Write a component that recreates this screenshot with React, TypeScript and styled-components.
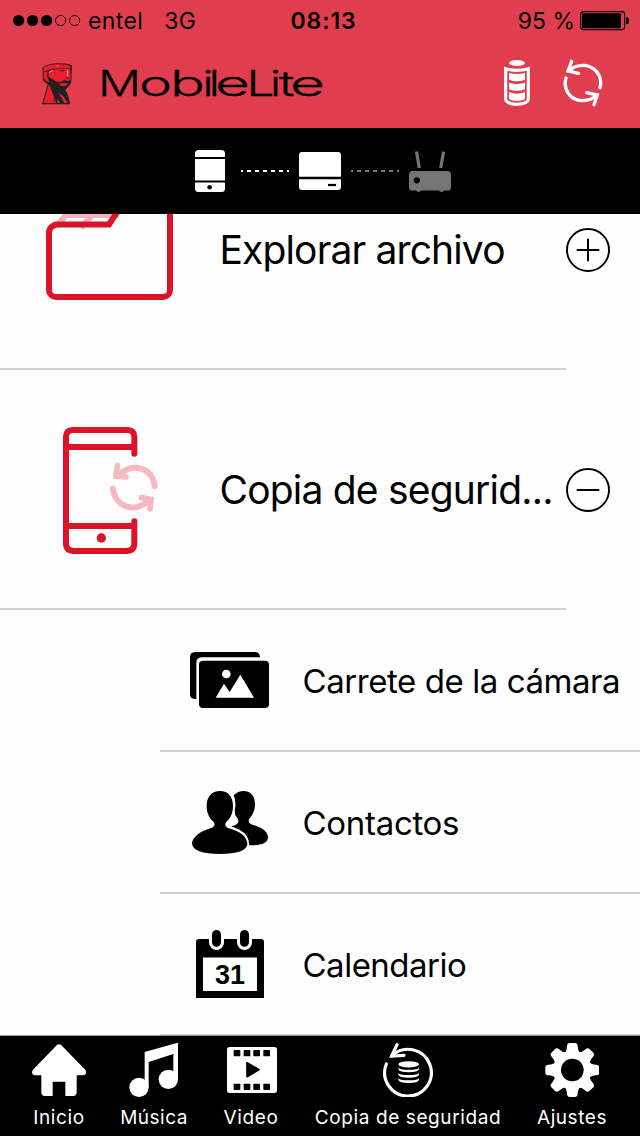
import React from "react";
import styled, { createGlobalStyle } from "styled-components";

const GlobalStyle = createGlobalStyle`
  * { box-sizing: border-box; }
  body { margin: 0; background: #fff; font-family: Inter, "Liberation Sans", sans-serif; color: #000; }
  svg { display: block; flex: none; }
`;

const Screen = styled.div`
  width: 640px;
  height: 1136px;
  display: flex;
  flex-direction: column;
  overflow: hidden;
  background: #fefefe;
`;

const Header = styled.header`
  height: 128px;
  flex: none;
  background: #e03e4e;
`;

const StatusBar = styled.div`
  height: 40px;
  display: grid;
  grid-template-columns: 1fr auto 1fr;
  align-items: center;
  padding: 2px 10px 0 13px;
  font-size: 23px;
  line-height: 28px;
`;

const StatusGroup = styled.div<{ $end?: boolean }>`
  display: flex;
  align-items: center;
  justify-content: ${(p) => (p.$end ? "flex-end" : "flex-start")};
`;

const StatusText = styled.span<{ $left?: number; $spacing?: number }>`
  margin-left: ${(p) => p.$left ?? 0}px;
  letter-spacing: ${(p) => p.$spacing ?? 0}px;
  white-space: pre;
`;

const Clock = styled.span`
  font-weight: 600;
  letter-spacing: 0.9px;
  padding-left: 4px;
`;

const TitleBar = styled.div`
  height: 88px;
  display: flex;
  align-items: center;
  padding: 0 36px 0 42px;
`;

const Spacer = styled.div`
  flex: 1;
`;

const Actions = styled.div`
  display: flex;
  align-items: center;
  gap: 32px;
  margin-top: -2px;
`;

const WordmarkSvg = styled.svg`
  margin-left: 14px;
  overflow: visible;
`;

const LinkBar = styled.div`
  height: 86px;
  flex: none;
  display: flex;
  align-items: center;
  padding-left: 195px;
  background: #000;
`;

const LinkGap = styled.div<{ $width: number }>`
  width: ${(p) => p.$width}px;
  flex: none;
`;

const List = styled.main`
  height: 822px;
  flex: none;
  display: flex;
  flex-direction: column;
  justify-content: flex-end;
  overflow: hidden;
`;

const Row = styled.div`
  height: 240px;
  flex: none;
  display: flex;
  align-items: center;
`;

const RowMain = styled.div`
  width: 566px;
  height: 240px;
  display: flex;
  align-items: center;
  padding-top: 2px;
  border-bottom: 2px solid #cfcfd0;
`;

const RowIcon = styled.div<{ $inset: number; $lift?: number }>`
  width: 219.5px;
  flex: none;
  padding-left: ${(p) => p.$inset}px;
  padding-bottom: ${(p) => p.$lift ?? 0}px;
`;

const RowLabel = styled.span<{ $spacing: number }>`
  font-size: 39px;
  line-height: 48px;
  letter-spacing: ${(p) => p.$spacing}px;
  white-space: nowrap;
`;

const SubRow = styled.div`
  height: 142px;
  flex: none;
  margin-left: 160px;
  padding: 2px 0 0 26px;
  display: flex;
  align-items: center;
  border-bottom: 2px solid #cfcfd0;
`;

const SubIcon = styled.div<{ $inset: number }>`
  width: 116.5px;
  flex: none;
  padding: 0 0 2px ${(p) => p.$inset}px;
`;

const SubLabel = styled.span<{ $spacing: number }>`
  font-size: 33px;
  line-height: 40px;
  letter-spacing: ${(p) => p.$spacing}px;
  white-space: nowrap;
`;

const TabBar = styled.nav`
  height: 101px;
  flex: none;
  margin-top: -1px;
  border-top: 1px solid #9a9a9a;
  background: #000;
  display: flex;
  gap: 34px;
  padding: 7px 0 0 32px;
  position: relative;
`;

const Tab = styled.div<{ $width: number }>`
  width: ${(p) => p.$width}px;
  display: flex;
  flex-direction: column;
  align-items: center;
  color: #fff;
`;

const TabLabel = styled.span<{ $spacing: number }>`
  margin-top: 9px;
  font-size: 19px;
  line-height: 24px;
  letter-spacing: ${(p) => p.$spacing}px;
  white-space: nowrap;
`;

const SignalDots = () => (
  <svg width="68" height="14" viewBox="0 0 68 14">
    {[0, 1, 2].map((i) => (
      <circle key={i} cx={5.6 + i * 14} cy="6.500" r="5.600" />
    ))}
    {[3, 4].map((i) => (
      <circle key={i} cx={5.6 + i * 14} cy="6.500" r="5.100" fill="none" stroke="#000" strokeWidth="1" />
    ))}
  </svg>
);

const PhoneBattery = () => (
  <svg width="50" height="20" viewBox="0 0 50 20">
    <rect x="0.6" y="0.7" width="44" height="18" rx="2.6" fill="none" stroke="#000" strokeWidth="1.2" />
    <rect x="2" y="2.2" width="39" height="15" rx="1" />
    <path d="M46 6.3c2.6.2 3 1.600 3 3.500s-.4 3.300-3 3.500z" />
  </svg>
);

const HeadLogo = () => (
  <svg width="31" height="42" viewBox="36 38 93 126">
    <path d="M37 52Q48 41 82 39Q113 38 126 46L124 94L119 105L106 119L114 135L121 162H36L53 102L38 90L38 62Z" fill="#231f20" />
    <path d="M40 51Q55 43 82 42Q110 41 122 48L119 55Q100 51 82 54Q60 57 41 64Z" fill="#ed1c2e" />
    <path d="M41 66L53 64L51 78L58 97L49 92L41 84Z" fill="#ed1c2e" />
    <path d="M55 65L80 55Q102 53 121 57L122 90L112 92L103 88L94 94H80L68 87L56 80Z" fill="#ed1c2e" />
    <path d="M86 61l15-2 5 2-10 2zM108 81l10 1-3 3-6-1z" fill="#231f20" />
    <path d="M56 103L61 110L71 138V158H40Z" fill="#ed1c2e" />
    <path d="M74 138L78 158H73ZM82 146L91 158H82ZM86 128L100 138L113 158H103Z" fill="#ed1c2e" />
    <path d="M88 99h26l-8 8-14-1z" fill="#ed1c2e" />
    <path d="M57 66l12-6M80 44l4 5M113 60v18" stroke="#fff" strokeWidth="2.500" opacity=".75" />
  </svg>
);

const letters: [string, number, number][] = [
  ["M", 98, 43],
  ["o", 139, 33],
  ["b", 170, 35],
  ["i", 202.5, 11],
  ["l", 208.7, 11],
  ["e", 215, 35],
  ["L", 246.6, 28],
  ["i", 270, 11],
  ["t", 279, 15.5],
  ["e", 290, 35],
];

const Wordmark = () => (
  <WordmarkSvg width="250" height="66" viewBox="87 51 250 66">
    <text y="96" fontSize="35" fontWeight="300" fontFamily="Inter, sans-serif" stroke="#000" strokeWidth="0.300">
      {letters.map(([ch, x, w], i) => (
        <tspan key={i} x={x} textLength={w} lengthAdjust="spacingAndGlyphs">
          {ch}
        </tspan>
      ))}
    </text>
  </WordmarkSvg>
);

const BatteryIcon = () => (
  <svg width="26" height="46" viewBox="522 180 78 138" fill="#fff">
    <ellipse cx="561" cy="189" rx="24" ry="9" />
    <path d="M527 206Q561 216 595 206V298Q593 312 561 313Q529 312 527 298Z" fill="none" stroke="#fff" strokeWidth="9.500" />
    <path d="M537 219Q561 225 585 219V239Q561 248 537 239ZM537 248Q561 256 585 248V268Q561 277 537 268ZM537 277Q561 285 585 277V296Q580 302 561 303Q542 302 537 296Z" />
  </svg>
);

const RefreshIcon = () => (
  <svg width="42" height="48" viewBox="697 177 126 144" fill="none" stroke="#fff" strokeWidth="10" strokeLinecap="round">
    <path d="M715 213Q735 196 760 196C790 196 813 220 813 248Q813 257 811 263" />
    <path d="M709 234C699 268 722 301 757 302Q784 302 803 285" />
    <path d="M726 184L715 213L747 220M771 278L803 285L793 314" />
  </svg>
);

const PhoneLink = () => (
  <svg width="30" height="42" viewBox="0 0 30 42">
    <rect width="30" height="42" rx="3.500" fill="#fff" />
    <path d="M0 8h30M0 31.600h30" stroke="#000" strokeWidth="2" />
    <circle cx="14.600" cy="37.200" r="2.300" />
  </svg>
);

const Dashes = ({ color }: { color: string }) => (
  <svg width="48" height="2" viewBox="0 0 48 2" fill={color}>
    <rect width="2" height="2" />
    {[6, 14, 22, 30, 38].map((x) => (
      <rect key={x} x={x} width="4" height="2" />
    ))}
    <rect x="46" width="2" height="2" />
  </svg>
);

const DriveLink = () => (
  <svg width="42" height="38" viewBox="0 0 42 38">
    <rect width="42" height="38" rx="3" fill="#fff" />
    <path d="M0 26h42" stroke="#000" strokeWidth="2.400" />
    <path d="M29 33h8" stroke="#000" strokeWidth="2.200" />
  </svg>
);

const RouterLink = () => (
  <svg width="42" height="42" viewBox="0 0 42 42">
    <path d="M7.500 1.600L10.300 18M34.600 1.600L31.700 18" stroke="#757575" strokeWidth="3.200" />
    <rect y="21" width="42" height="19.500" rx="3.600" fill="#757575" />
    <path d="M7 40h5q-.5 2-2.500 2t-2.500-2M30 40h5q-.5 2-2.500 2t-2.500-2" fill="#757575" />
    <circle cx="7.800" cy="30.300" r="3.100" />
  </svg>
);

const FolderIcon = () => (
  <svg width="129" height="112" viewBox="0 0 129 112" fill="none">
    <path d="M12 37L21 26H74M36 39L47 26" stroke="#f5b0b8" strokeWidth="6" />
    <path d="M125 8V101a7 7 0 0 1-7 7H11a7 7 0 0 1-7-7V44a8.500 8.500 0 0 1 8.500-8.500H64L82 8" stroke="#dd1428" strokeWidth="6" />
  </svg>
);

const BackupIcon = () => (
  <svg width="96" height="127" viewBox="99 51 288 381" fill="none" strokeLinecap="round">
    <path d="M313 131V79Q312 61 293 60H128Q109 61 108 79V404Q110 422 130 423H291Q311 422 313 404V334M108 111H313M108 348H313" stroke="#dd1428" strokeWidth="18" />
    <circle cx="214" cy="384" r="14" fill="#dd1428" />
    <g stroke="#f6b9c0" strokeWidth="18">
      <path d="M269 193C307 155 371 176 374 228M249 236C254 290 314 311 356 272" />
      <path d="M262 167L258 198L288 201M334 263L363 268L360 297" strokeWidth="17" />
      <path d="M249 206L264 190L282 203ZM372 261L357 276L346 264Z" fill="#f6b9c0" stroke="none" />
    </g>
  </svg>
);

const ToggleIcon = ({ open }: { open?: boolean }) => (
  <svg width="44" height="44" viewBox="0 0 44 44" fill="none" stroke="#000" strokeLinecap="round">
    <circle cx="22" cy="22" r="21" strokeWidth="1.900" />
    <path d={open ? "M11.500 22h21" : "M11.500 22h21M22 11.500v21"} strokeWidth="2" />
  </svg>
);

const PhotosIcon = () => (
  <svg width="79" height="56" viewBox="30 36 237 168">
    <path d="M45 36H227Q239 37 240 52H64Q49 54 49 68V177Q31 178 30 164V50Q31 37 45 36Z" />
    <rect x="57" y="62" width="210" height="142" rx="12" />
    <path d="M107 173L132 131L149 156L181 104L222 173Z" fill="#fff" />
    <circle cx="139" cy="102" r="13" fill="#fff" />
  </svg>
);

const ContactsIcon = () => (
  <svg width="77" height="63" viewBox="36 33 231 189">
    <path d="M191 33C213 33 225 49 225 73C225 95 215 108 207 118Q203 128 213 133C245 141 264 154 264 172C264 190 243 197 208 196Q208 164 178 149L154 139Q170 136 175 127Q177 120 166 106Q163 95 166 78Q167 57 161 46Q174 33 191 33Z" />
    <path d="M120 33C145 33 159 51 159 78C159 104 148 118 138 127Q132 138 143 144C181 152 202 171 202 192C201 212 172 222 120 222C66 222 37 212 36 190C37 170 65 151 96 143Q108 137 101 126C90 116 80 103 80 78C80 51 95 33 120 33Z" />
  </svg>
);

const CalendarIcon = () => (
  <svg width="68" height="68" viewBox="0 0 68 68">
    <path d="M3 9H65Q68 9 68 12V68H0V12Q0 9 3 9Z" />
    <path d="M20.500 4v8.500M48.500 4v8.500" stroke="#fff" strokeWidth="15" strokeLinecap="round" />
    <path d="M20.500 4.500v7.800M48.500 4.500v7.800" stroke="#000" strokeWidth="9" strokeLinecap="round" />
    <rect x="7" y="27.500" width="54" height="33.500" fill="#fff" />
    <text x="34" y="54.300" textAnchor="middle" fontFamily="Liberation Sans, Arial, sans-serif" fontWeight="700" fontSize="27">
      31
    </text>
  </svg>
);

const HomeIcon = () => (
  <svg width="54" height="54" viewBox="96 51 162 162">
    <path
      d="M170 58Q177 51 184 58L256 131Q259 137 258 142Q256 148 249 148H230V200Q229 209 220 210H196V167H158V210H134Q125 209 124 200V148H104Q97 147 96 140Q96 134 99 131Z"
      fill="#fff"
    />
  </svg>
);

const MusicIcon = () => (
  <svg width="54" height="54" viewBox="383 51 162 162" fill="#fff">
    <path d="M436 78L536 50V160H522V84L448 108V184H436Z" />
    <circle cx="419" cy="184" r="29" />
    <circle cx="507" cy="160" r="29" />
  </svg>
);

const VideoIcon = () => (
  <svg width="54" height="54" viewBox="672 51 162 162">
    <rect x="681" y="63" width="150" height="138" rx="8" fill="#fff" />
    {[701, 731, 760, 790].map((x) => (
      <g key={x}>
        <rect x={x} y="72" width="20" height="19" rx="2" />
        <rect x={x} y="173" width="20" height="19" rx="2" />
      </g>
    ))}
    <path d="M741 110L777 131L741 152Z" stroke="#000" strokeWidth="5" strokeLinejoin="round" />
  </svg>
);

const RestoreIcon = () => (
  <svg width="54" height="54" viewBox="181 51 162 162" fill="none" stroke="#fff" strokeLinecap="round">
    <path d="M213 90A70 70 0 1 1 197 114" strokeWidth="9.500" />
    <path d="M229 56L213 90L250 88" strokeWidth="9.500" />
    <ellipse cx="264" cy="115" rx="31" ry="9.500" fill="#fff" stroke="none" />
    {[130, 146, 162].map((y) => (
      <path key={y} d={`M233 ${y - 5}Q236 ${y + 1} 264 ${y + 1}T295 ${y - 5}V${y}Q292 ${y + 9} 264 ${y + 9}T233 ${y}Z`} fill="#fff" stroke="none" />
    ))}
  </svg>
);

const GearIcon = () => (
  <svg width="54" height="54" viewBox="-82 -81 162 162">
    <g fill="#fff">
      <circle r="57" />
      {[0, 45, 90, 135, 180, 225, 270, 315].map((a) => (
        <path
          key={a}
          transform={`rotate(${a})`}
          d="M-25 -50Q-17 -55 -16 -72Q-15 -81 -8 -81H8Q15 -81 16 -72Q17 -55 25 -50Z"
        />
      ))}
    </g>
    <circle r="34" />
  </svg>
);

export default function App() {
  return (
    <Screen>
      <GlobalStyle />
      <Header>
        <StatusBar>
          <StatusGroup>
            <SignalDots />
            <StatusText $left={7} $spacing={0.4}>entel</StatusText>
            <StatusText $left={21} $spacing={0.3}>3G</StatusText>
          </StatusGroup>
          <Clock>08:13</Clock>
          <StatusGroup $end>
            <StatusText>95 %</StatusText>
            <LinkGap $width={5} />
            <PhoneBattery />
          </StatusGroup>
        </StatusBar>
        <TitleBar>
          <HeadLogo />
          <Wordmark />
          <Spacer />
          <Actions>
            <BatteryIcon />
            <RefreshIcon />
          </Actions>
        </TitleBar>
      </Header>
      <LinkBar>
        <PhoneLink />
        <LinkGap $width={16} />
        <Dashes color="#fff" />
        <LinkGap $width={10} />
        <DriveLink />
        <LinkGap $width={10} />
        <Dashes color="#757575" />
        <LinkGap $width={10} />
        <RouterLink />
      </LinkBar>
      <List>
        <Row>
          <RowMain>
            <RowIcon $inset={45} $lift={10}>
              <FolderIcon />
            </RowIcon>
            <RowLabel $spacing={-0.86}>Explorar archivo</RowLabel>
          </RowMain>
          <ToggleIcon />
        </Row>
        <Row>
          <RowMain>
            <RowIcon $inset={63}>
              <BackupIcon />
            </RowIcon>
            <RowLabel $spacing={-0.8}>Copia de segurid...</RowLabel>
          </RowMain>
          <ToggleIcon open />
        </Row>
        <SubRow>
          <SubIcon $inset={4}>
            <PhotosIcon />
          </SubIcon>
          <SubLabel $spacing={-0.43}>Carrete de la cámara</SubLabel>
        </SubRow>
        <SubRow>
          <SubIcon $inset={6}>
            <ContactsIcon />
          </SubIcon>
          <SubLabel $spacing={-0.3}>Contactos</SubLabel>
        </SubRow>
        <SubRow>
          <SubIcon $inset={10}>
            <CalendarIcon />
          </SubIcon>
          <SubLabel $spacing={-0.5}>Calendario</SubLabel>
        </SubRow>
      </List>
      <TabBar>
        <Tab $width={54}>
          <HomeIcon />
          <TabLabel $spacing={0.6}>Inicio</TabLabel>
        </Tab>
        <Tab $width={68}>
          <MusicIcon />
          <TabLabel $spacing={0.5}>Música</TabLabel>
        </Tab>
        <Tab $width={58}>
          <VideoIcon />
          <TabLabel $spacing={0.6}>Video</TabLabel>
        </Tab>
        <Tab $width={188}>
          <RestoreIcon />
          <TabLabel $spacing={0.6}>Copia de seguridad</TabLabel>
        </Tab>
        <Tab $width={72}>
          <GearIcon />
          <TabLabel $spacing={0.55}>Ajustes</TabLabel>
        </Tab>
      </TabBar>
    </Screen>
  );
}
